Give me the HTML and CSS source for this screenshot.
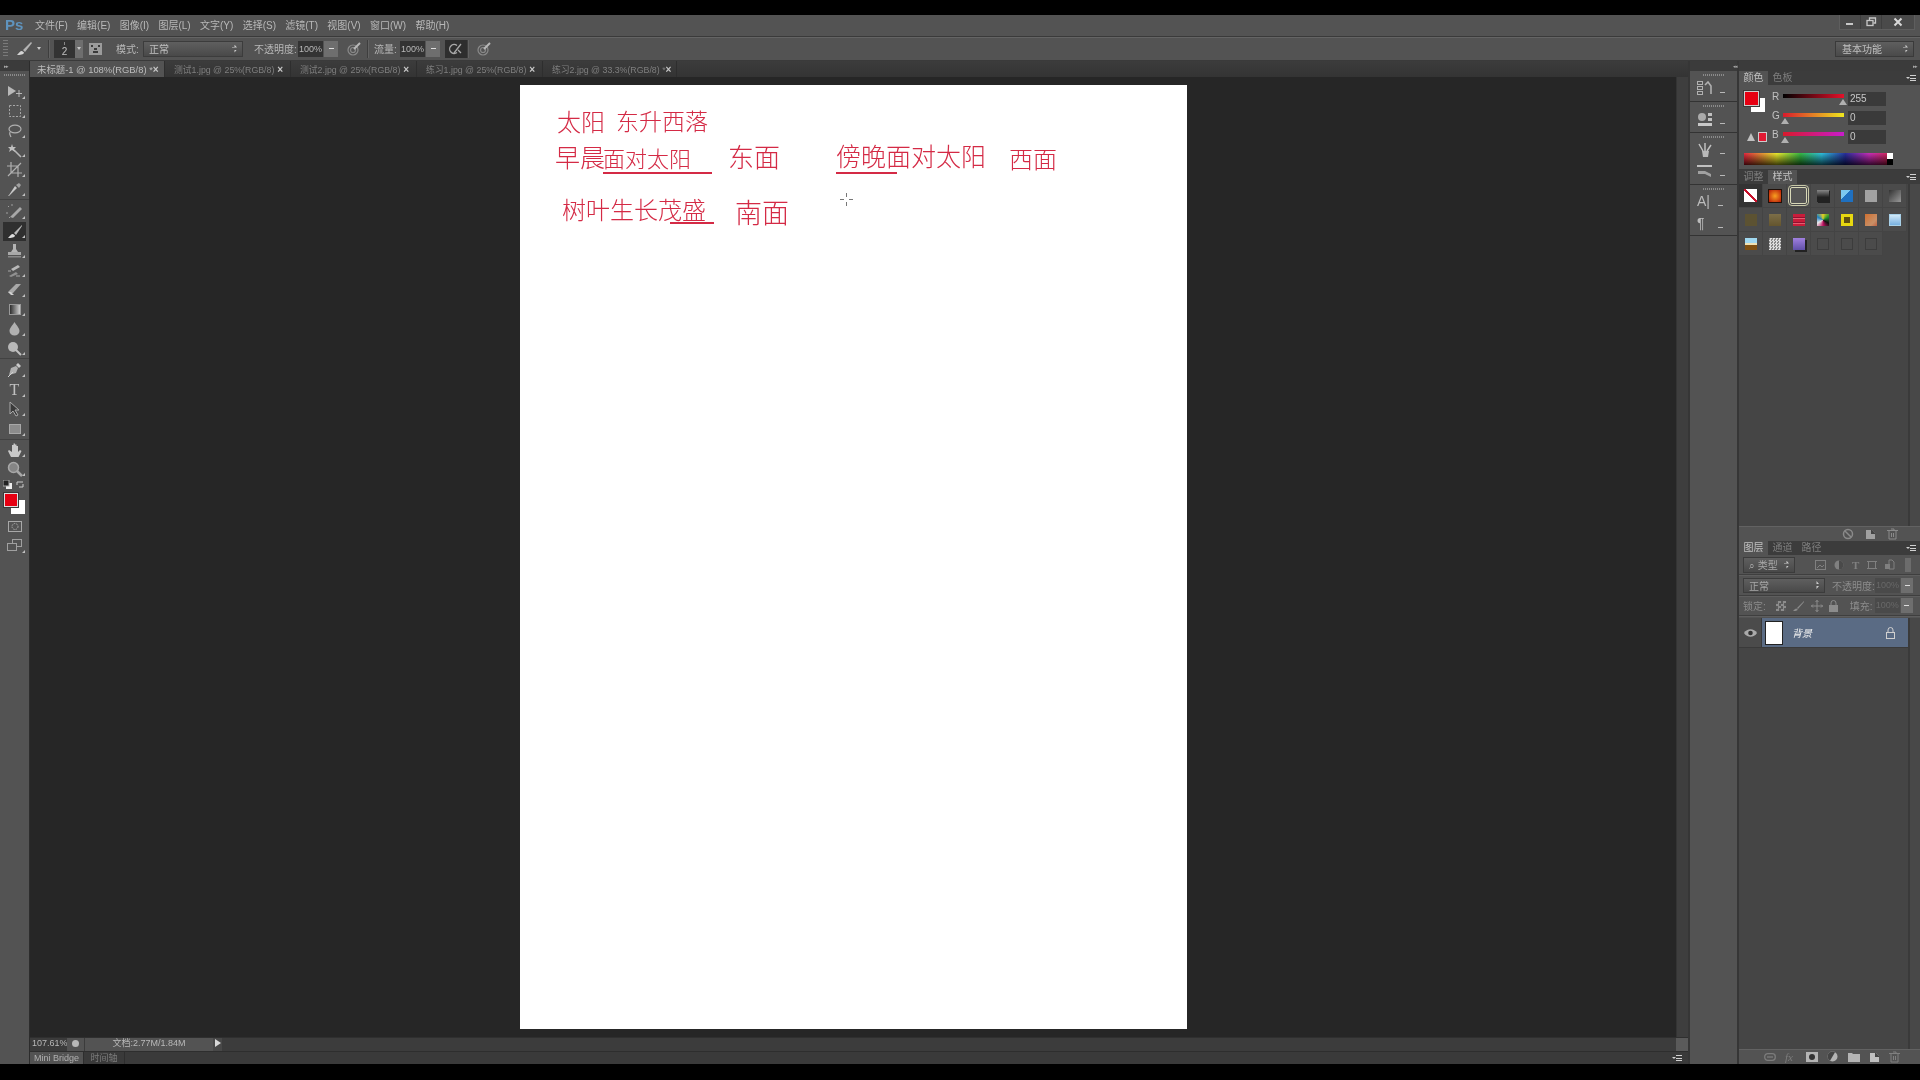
FILE: index.html
```html
<!DOCTYPE html>
<html lang="zh-CN">
<head>
<meta charset="utf-8">
<title>Photoshop</title>
<link rel="stylesheet" href="styles.css">
</head>
<body>
<div class="app">
  <div class="black-top"></div>

  <header class="menubar">
    <div class="logo">Ps</div>
    <nav class="menu">
      <span>文件(F)</span><span>编辑(E)</span><span>图像(I)</span><span>图层(L)</span><span>文字(Y)</span><span>选择(S)</span><span>滤镜(T)</span><span>视图(V)</span><span>窗口(W)</span><span>帮助(H)</span>
    </nav>
    <div class="winbtns">
      <div class="winbtn w1"><svg width="10" height="10" viewBox="0 0 10 10"><rect x="1" y="6" width="7" height="2" fill="#c8c8c8"/></svg></div>
      <div class="winbtn w2"><svg width="11" height="10" viewBox="0 0 11 10" fill="none" stroke="#c8c8c8" stroke-width="1.3"><rect x="1" y="3.5" width="6" height="5"/><path d="M3.5 3V1h6v5H7.5"/></svg></div>
      <div class="winbtn w3"><svg width="10" height="10" viewBox="0 0 10 10" stroke="#d8d8d8" stroke-width="2"><path d="M1.5 1.5l7 7M8.5 1.5l-7 7"/></svg></div>
    </div>
  </header>

  <div class="optbar">
    <div class="grip"></div>
    <svg class="opt-brush" width="18" height="16" viewBox="0 0 18 16"><path d="M16 1L8 9l2 2 7-9z" fill="#b4b4b4"/><path d="M7 10c-2 0-3 2-5 4 3 0 7-.5 7-2.500z" fill="#d4d4d4"/></svg>
    <span class="tri-down"></span>
    <div class="vsep s1"></div>
    <div class="sizebox"><i></i><b>2</b></div>
    <div class="sizebtn"><span class="tri-down"></span></div>
    <div class="brushpanel"><svg width="13" height="12" viewBox="0 0 13 12"><rect width="13" height="12" fill="#9b9b9b"/><path d="M2 2h2v2H2zm7 0h2v2H9zM5 5h3v2H5zM4 8h5v2H4z" fill="#3a3a3a"/></svg></div>
    <span class="lbl l-mode">模式:</span>
    <div class="select s-mode"><span>正常</span><em class="updown"></em></div>
    <span class="lbl l-op">不透明度:</span>
    <div class="field f-op">100%</div>
    <div class="fbtn"><span class="dash"></span></div>
    <svg class="air a1" width="14" height="14" viewBox="0 0 14 14" fill="none" stroke="#8a8a8a" stroke-width="1.200"><circle cx="6" cy="8" r="5"/><circle cx="6" cy="8" r="2.500"/><path d="M7 7l6-6" stroke="#b8b8b8" stroke-width="2"/></svg>
    <div class="vsep s2"></div>
    <span class="lbl l-fl">流量:</span>
    <div class="field f-fl">100%</div>
    <div class="fbtn"><span class="dash"></span></div>
    <div class="airbox"><svg width="14" height="12" viewBox="0 0 14 12" fill="none" stroke="#a8a8a8" stroke-width="1.300"><path d="M8 2.500A4.500 4.500 0 1 0 8 9.500M5 10l7-9M9 7l3 3"/></svg></div>
    <div class="vsep s3"></div>
    <svg class="air a2" width="14" height="14" viewBox="0 0 14 14" fill="none" stroke="#8a8a8a" stroke-width="1.200"><circle cx="6" cy="8" r="5"/><circle cx="6" cy="8" r="2.500"/><path d="M7 7l6-6" stroke="#b8b8b8" stroke-width="2"/></svg>
    <div class="workspace"><span>基本功能</span><em class="updown"></em></div>
  </div>

  <div class="work">
    <aside class="toolbar">
      <div class="strip"><span class="arrows">▸▸</span></div>
      <div class="grip-h"></div>
      <div class="toolgroup g1">
        <div class="tool more"><svg width="16" height="14" viewBox="0 0 16 14"><path d="M1 1l8 5-8 5z" fill="#b8b8b8"/><path d="M12 5v7M9 8.500h6" stroke="#b8b8b8"/></svg></div>
        <div class="tool more"><svg width="14" height="14" viewBox="0 0 14 14"><rect x="1.500" y="1.500" width="11" height="11" fill="none" stroke="#a8a8a8" stroke-dasharray="2 1.500"/></svg></div>
        <div class="tool more"><svg width="15" height="14" viewBox="0 0 15 14" fill="none" stroke="#b0b0b0" stroke-width="1.200"><ellipse cx="8" cy="5" rx="6" ry="3.800"/><path d="M3 8c-1 2 0 3 1 5"/></svg></div>
        <div class="tool more"><svg width="15" height="15" viewBox="0 0 15 15"><path d="M7 7l7 7" stroke="#b8b8b8" stroke-width="1.600"/><path d="M5 1l1 3 3 0-2 2 1 3-3-2-3 2 1-3-2-2 3 0z" fill="#c0c0c0"/></svg></div>
        <div class="tool more"><svg width="15" height="15" viewBox="0 0 15 15" fill="none" stroke="#b0b0b0" stroke-width="1.200"><path d="M4 0v11h11M0 4h11v11M1 14L14 1"/></svg></div>
        <div class="tool more"><svg width="15" height="15" viewBox="0 0 15 15"><path d="M2 13l-1 1 1 0 8-8-2-2z" fill="#c8c8c8"/><path d="M9 3l3 3 2-3-2-2z" fill="#a0a0a0"/></svg></div>
      </div>
      <div class="toolgroup g2">
        <div class="tool more"><svg width="17" height="15" viewBox="0 0 17 15"><path d="M4 13L14 3l2 2L7 14z" fill="#a8a8a8"/><path d="M2 3l1-1M1 8v2M5 1h2M3 13l1 1" stroke="#a0a0a0" stroke-dasharray="2 1"/></svg></div>
        <div class="tool active more"><svg width="17" height="15" viewBox="0 0 17 15"><path d="M16 1L8 9l2 2 6-9z" fill="#b8b8b8"/><path d="M7 10c-2 0-3 2-5 4 3 0 7-.5 7-2.500z" fill="#dcdcdc"/></svg></div>
        <div class="tool more"><svg width="15" height="15" viewBox="0 0 15 15"><path d="M6 1h3v5l2 3H4l2-3z" fill="#b4b4b4"/><rect x="1" y="9" width="13" height="3" fill="#a8a8a8"/><rect x="1" y="13" width="13" height="1.500" fill="#888"/></svg></div>
        <div class="tool more"><svg width="15" height="15" viewBox="0 0 15 15"><path d="M4 6l7-4 2 2-7 4z" fill="#b8b8b8"/><path d="M2 13l7-4 2 2-7 3z" fill="#909090"/><path d="M1 8h3M9 13h4" stroke="#a8a8a8"/></svg></div>
        <div class="tool more"><svg width="15" height="15" viewBox="0 0 15 15"><path d="M1 10l8-8h5l-8 9H3z" fill="#a8a8a8"/><path d="M1 10l3 3h3l-3-3z" fill="#d0d0d0"/></svg></div>
        <div class="tool more"><span class="gradicon"></span></div>
        <div class="tool more"><svg width="13" height="15" viewBox="0 0 13 15"><path d="M6.500 1C9 5 11.500 7 11.500 10a5 4.500 0 0 1-10 0C1.500 7 4 5 6.500 1z" fill="#b0b0b0"/></svg></div>
        <div class="tool more"><svg width="15" height="15" viewBox="0 0 15 15"><circle cx="6" cy="6" r="5" fill="#b8b8b8"/><path d="M9 9l5 5" stroke="#c0c0c0" stroke-width="2"/></svg></div>
      </div>
      <div class="toolgroup g3">
        <div class="tool more"><svg width="15" height="16" viewBox="0 0 15 16"><path d="M2 13l2-7 5-2 2 2-2 5z" fill="#b0b0b0"/><path d="M9 3l2-2 3 3-2 2z" fill="#c8c8c8"/><path d="M1 15l5-5" stroke="#d0d0d0"/></svg></div>
        <div class="tool more tool-text">T</div>
        <div class="tool more"><svg width="13" height="16" viewBox="0 0 13 16"><path d="M2 1v12l3-3 3 5 2-1-3-5 4 0z" fill="#3a3a3a" stroke="#a8a8a8"/></svg></div>
        <div class="tool more"><span class="recticon"></span></div>
      </div>
      <div class="toolgroup g4">
        <div class="tool more"><svg width="16" height="16" viewBox="0 0 16 16"><path d="M4 15L1 9l1-1 3 2V3h1.500v5V1.500H8V8V2.500h1.500V8V4H11v6l2-2 1.500 1-3 6z" fill="#c8c8c8"/></svg></div>
        <div class="tool more"><svg width="16" height="16" viewBox="0 0 16 16" fill="none" stroke="#a8a8a8"><circle cx="6.500" cy="6.500" r="5" stroke-width="1.500" fill="#858585"/><path d="M10 10l5 5" stroke-width="2.500"/></svg></div>
      </div>
      <div class="mini-colors"><span class="mini-sw"><svg width="9" height="9" viewBox="0 0 9 9"><rect x="3" y="3" width="6" height="6" fill="#eee"/><rect width="6" height="6" fill="#222" stroke="#aaa"/></svg></span><span class="mini-sw"><svg width="9" height="9" viewBox="0 0 9 9" fill="none" stroke="#ccc"><path d="M1 5V2h6M7 4v3H3"/></svg></span></div>
      <div class="colors"><span class="bgc"></span><span class="fgc"></span></div>
      <div class="tool mask"><svg width="14" height="11" viewBox="0 0 14 11" fill="none" stroke="#a8a8a8"><rect x=".5" y=".5" width="13" height="10"/><circle cx="7" cy="5.500" r="3" stroke-dasharray="1.500 1"/></svg></div>
      <div class="tool more"><svg width="15" height="13" viewBox="0 0 15 13" fill="none" stroke="#a0a0a0"><rect x="5.500" y=".5" width="9" height="7"/><rect x=".5" y="4.500" width="9" height="7" fill="#535353"/></svg></div>
    </aside>

    <main class="center">
      <div class="tabs">
        <div class="tab on t1"><span>未标题-1 @ 108%(RGB/8) *</span><b>×</b></div>
        <div class="tab t2"><span>测试1.jpg @ 25%(RGB/8)</span><b>×</b></div>
        <div class="tab t2"><span>测试2.jpg @ 25%(RGB/8)</span><b>×</b></div>
        <div class="tab t2"><span>练习1.jpg @ 25%(RGB/8)</span><b>×</b></div>
        <div class="tab t3"><span>练习2.jpg @ 33.3%(RGB/8) *</span><b>×</b></div>
      </div>
      <div class="docrow">
        <div class="pasteboard">
          <div class="canvas">
            <span class="ink i1">太阳</span>
            <span class="ink i2">东升西落</span>
            <span class="ink i3">早晨</span>
            <span class="ink i4">面对太阳</span>
            <span class="stroke u1"></span>
            <span class="ink i5">东面</span>
            <span class="ink i6">傍晚面对太阳</span>
            <span class="stroke u2"></span>
            <span class="ink i7">西面</span>
            <span class="ink i8">树叶生长茂盛</span>
            <span class="stroke u3"></span>
            <span class="ink i9">南面</span>
            <svg class="cross" width="13" height="13" viewBox="0 0 13 13" stroke="#777"><path d="M6.500 0v4M6.500 9v4M0 6.500h4M9 6.500h4"/></svg>
          </div>
        </div>
        <div class="vscroll"></div>
      </div>
      <div class="status">
        <span class="zoomval">107.61%</span>
        <span class="statbtn"></span>
        <div class="docinfo">文档:2.77M/1.84M</div>
        <div class="statarrow"></div>
        <div class="hscroll"></div>
        <div class="corner"></div>
      </div>
      <div class="btabs">
        <div class="btab b1">Mini Bridge</div>
        <div class="btab b2">时间轴</div>
        <div class="menuicon bmenu"><i></i></div>
      </div>
    </main>

    <div class="dock">
      <div class="strip right"><span class="arrows">◂◂</span></div>
      <div class="dockgroup h30">
        <div class="grip-h"></div>
        <div class="dockitem"><svg width="16" height="15" viewBox="0 0 16 15" fill="none" stroke="#b0b0b0"><rect x=".5" y=".5" width="5" height="3"/><rect x=".5" y="5.500" width="5" height="3"/><rect x=".5" y="10.500" width="5" height="3"/><path d="M8 4l3-3 3 4v8" stroke-width="1.600"/></svg><em></em></div>
      </div>
      <div class="dockgroup h31">
        <div class="grip-h"></div>
        <div class="dockitem"><svg width="16" height="15" viewBox="0 0 16 15"><circle cx="5" cy="5" r="4" fill="#aaa"/><rect x="11" y="1" width="4" height="3" fill="#c0c0c0"/><rect x="11" y="6" width="4" height="3" fill="#c0c0c0"/><rect x="1" y="11" width="14" height="3" fill="#c8c8c8"/></svg><em></em></div>
      </div>
      <div class="dockgroup h52">
        <div class="grip-h"></div>
        <div class="dockitem"><svg width="16" height="15" viewBox="0 0 16 15"><path d="M5 9h7l-1 6H6z" fill="#b8b8b8"/><path d="M6 9L2 2M8 9V1M10 9l4-6" stroke="#c0c0c0" stroke-width="1.500"/></svg><em></em></div>
        <div class="dockitem"><svg width="16" height="14" viewBox="0 0 16 14"><rect x="0" y="1" width="15" height="2" fill="#c0c0c0"/><path d="M1 7h7l6 3v3L8 10H1z" fill="#a0a0a0"/></svg><em></em></div>
      </div>
      <div class="dockgroup h51">
        <div class="grip-h"></div>
        <div class="dockitem txt"><span>A|</span><em></em></div>
        <div class="dockitem txt"><span>¶</span><em></em></div>
      </div>
    </div>

    <aside class="panels">
      <div class="strip right"><span class="arrows">▸▸</span></div>
      <section class="p-color">
        <div class="ptabs">
          <div class="ptab on">颜色</div><div class="ptab">色板</div>
          <div class="menuicon"><i></i></div>
        </div>
        <div class="colorbody">
          <div class="colormain">
            <div class="colorleft">
              <div class="bigsw"><span class="bg"></span><span class="fg"></span></div>
              <div class="warn"><span class="warntri"></span><span class="warnsq"></span></div>
            </div>
            <div class="sliders">
              <div class="slider"><label>R</label><div class="track"><span class="bar r"></span><span class="thumb tend"></span></div><div class="cfield">255</div></div>
              <div class="slider"><label>G</label><div class="track"><span class="bar g"></span><span class="thumb"></span></div><div class="cfield">0</div></div>
              <div class="slider"><label>B</label><div class="track"><span class="bar b"></span><span class="thumb"></span></div><div class="cfield">0</div></div>
            </div>
          </div>
          <div class="spectrum"><span class="wb"></span></div>
        </div>
      </section>
      <section class="p-styles">
        <div class="ptabs">
          <div class="ptab">调整</div><div class="ptab on">样式</div>
          <div class="menuicon"><i></i></div>
        </div>
        <div class="stylesbody">
          <div class="stylegrid">
            <div class="cell first"><span class="sw s-none"></span></div>
            <div class="cell"><span class="sw s-fire"></span></div>
            <div class="cell"><span class="sw s-frame"></span></div>
            <div class="cell"><span class="sw s-dark"></span></div>
            <div class="cell"><span class="sw s-blue"></span></div>
            <div class="cell"><span class="sw s-gray"></span></div>
            <div class="cell"><span class="sw s-graygrad"></span></div>
            <div class="cell"><span class="sw s-brown1"></span></div>
            <div class="cell"><span class="sw s-brown2"></span></div>
            <div class="cell"><span class="sw s-red"></span></div>
            <div class="cell"><span class="sw s-multi"></span></div>
            <div class="cell"><span class="sw s-yellow"></span></div>
            <div class="cell"><span class="sw s-orange"></span></div>
            <div class="cell"><span class="sw s-lblue"></span></div>
            <div class="cell"><span class="sw s-sky"></span></div>
            <div class="cell"><span class="sw s-noise"></span></div>
            <div class="cell"><span class="sw s-purple"></span></div>
            <div class="cell"><span class="sw s-out"></span></div>
            <div class="cell"><span class="sw s-out"></span></div>
            <div class="cell"><span class="sw s-out"></span></div>
          </div>
          <div class="pscroll"></div>
        </div>
        <div class="pfoot f-styles">
          <svg width="12" height="12" viewBox="0 0 12 12" fill="none" stroke="#8a8a8a" stroke-width="1.500"><circle cx="6" cy="6" r="4.500"/><path d="M3 3l6 6"/></svg>
          <svg width="11" height="11" viewBox="0 0 11 11"><path d="M1 1h6l3 3v6H1z" fill="#a0a0a0"/><path d="M6 1h1l3 3v1H6z" fill="#444"/></svg>
          <svg width="11" height="12" viewBox="0 0 11 12" fill="none" stroke="#8a8a8a"><path d="M0 2.500h11M2 3v8h7V3M4 1h3v1.500M4.500 5v4M6.500 5v4"/></svg>
        </div>
      </section>
      <section class="p-layers">
        <div class="ptabs">
          <div class="ptab on">图层</div><div class="ptab">通道</div><div class="ptab">路径</div>
          <div class="menuicon"><i></i></div>
        </div>
        <div class="lrow r-filter">
          <div class="select s-filter"><span>⌕ 类型</span><em class="updown"></em></div>
          <div class="ficons">
            <svg width="11" height="10" viewBox="0 0 11 10" fill="none" stroke="#808080"><rect x=".5" y=".5" width="10" height="9"/><path d="M2 8l3-3 2 2 2-2"/></svg>
            <svg width="10" height="10" viewBox="0 0 10 10"><circle cx="5" cy="5" r="4.500" fill="#808080"/><path d="M5 .5a4.500 4.500 0 0 1 0 9z" fill="#4a4a4a"/></svg>
            <span class="fT">T</span>
            <svg width="10" height="10" viewBox="0 0 10 10" fill="none" stroke="#808080"><rect x="1.500" y="1.500" width="7" height="7"/><path d="M0 1.500h3M7 1.500h3M0 8.500h3M7 8.500h3"/></svg>
            <svg width="10" height="11" viewBox="0 0 10 11"><path d="M4 1h3l2 2v7H4z" fill="none" stroke="#808080"/><rect x="0" y="5" width="5" height="5" fill="#808080"/></svg>
            <span class="ftoggle"></span>
          </div>
        </div>
        <div class="lrow r-mode">
          <div class="select s-blend"><span>正常</span><em class="updown"></em></div>
          <span class="plbl op">不透明度:</span>
          <div class="dimfield">100%</div>
          <div class="fbtn small"><span class="dash"></span></div>
        </div>
        <div class="lrow r-lock">
          <span class="plbl">锁定:</span>
          <div class="lockicons">
            <span class="chk"></span>
            <svg width="13" height="12" viewBox="0 0 13 12"><path d="M12 1L5 8l1 1 6-7z" fill="#8c8c8c"/><path d="M4 8.500C3 9 2 10 1 11c2 0 5 0 4.500-2z" fill="#8c8c8c"/></svg>
            <svg width="12" height="12" viewBox="0 0 12 12" fill="none" stroke="#8c8c8c"><path d="M6 0v12M0 6h12M4.500 2L6 .5 7.500 2M4.500 10L6 11.500 7.500 10M2 4.500L.5 6 2 7.500M10 4.500L11.500 6 10 7.500"/></svg>
            <svg width="9" height="12" viewBox="0 0 9 12"><path d="M2 5V3a2.500 2.500 0 0 1 5 0v2" fill="none" stroke="#8c8c8c"/><rect y="5" width="9" height="7" fill="#8c8c8c"/></svg>
          </div>
          <span class="plbl fill">填充:</span>
          <div class="dimfield">100%</div>
          <div class="fbtn small"><span class="dash"></span></div>
        </div>
        <div class="layersbody">
          <div class="layerlist">
            <div class="layer">
              <div class="eye"><svg width="13" height="8" viewBox="0 0 13 8"><path d="M0 4c3-5 10-5 13 0-3 5-10 5-13 0z" fill="#aaa"/><circle cx="6.500" cy="4" r="2.300" fill="#333"/></svg></div>
              <div class="lmain">
                <div class="thumb-l"></div>
                <span class="lname">背景</span>
                <svg class="llock" width="9" height="12" viewBox="0 0 9 12" fill="none" stroke="#d0d0d0"><path d="M2 5V3a2.500 2.500 0 0 1 5 0v2"/><rect x=".5" y="5.500" width="8" height="6"/></svg>
              </div>
            </div>
          </div>
          <div class="pscroll"></div>
        </div>
        <div class="pfoot f-layers">
          <svg width="12" height="8" viewBox="0 0 12 8" fill="none" stroke="#7c7c7c" stroke-width="1.300"><rect x=".7" y=".7" width="10.600" height="6.600" rx="3"/><path d="M3 4h6"/></svg>
          <span class="fx">fx</span>
          <svg width="12" height="10" viewBox="0 0 12 10"><rect width="12" height="10" fill="#b4b4b4"/><circle cx="6" cy="5" r="3" fill="#333"/></svg>
          <svg width="12" height="12" viewBox="0 0 12 12"><circle cx="5.500" cy="5.500" r="5" fill="#b4b4b4"/><path d="M5.500 .5a5 5 0 0 0 0 10z" fill="#444" transform="rotate(30 5.500 5.500)"/></svg>
          <svg width="12" height="10" viewBox="0 0 12 10"><path d="M0 1h4l1 1h7v8H0z" fill="#b4b4b4"/></svg>
          <svg width="11" height="11" viewBox="0 0 11 11"><path d="M1 1h6l3 3v6H1z" fill="#c0c0c0"/><path d="M6 1h1l3 3v1H6z" fill="#444"/></svg>
          <svg width="11" height="12" viewBox="0 0 11 12" fill="none" stroke="#808080"><path d="M0 2.500h11M2 3v8h7V3M4 1h3v1.500M4.500 5v4M6.500 5v4"/></svg>
        </div>
      </section>
    </aside>
  </div>

  <div class="black-bottom"></div>
</div>
</body>
</html>
```
FILE: styles.css
```css
* { box-sizing: border-box; margin: 0; padding: 0; }
html, body { width: 1920px; height: 1080px; overflow: hidden; background: #000; }
body { font-family: "Liberation Sans", "Noto Sans CJK SC", sans-serif; font-size: 10px; color: #bdbdbd; }
em { font-style: normal; }

.app { width: 1920px; height: 1080px; display: flex; flex-direction: column; filter: blur(0.4px); }
.black-top { height: 15px; background: #000; flex: none; }
.black-bottom { height: 16px; background: #000; flex: none; }

/* menu */
.menubar { height: 22px; flex: none; display: flex; align-items: center; background: #535353; border-bottom: 1px solid #3a3a3a; position: relative; }
.logo { width: 35px; padding-left: 5px; font: bold 15px "Liberation Sans", sans-serif; color: #5f93bd; margin-bottom: 2px; }
.menu { display: flex; gap: 9.300px; color: #b8b8b8; margin-bottom: 2px; }
.winbtns { margin-left: auto; margin-right: 5px; align-self: flex-start; display: flex; height: 15px; background: #4a4a4a; border: 1px solid #5e5e5e; border-top: 0; }
.winbtn { display: flex; align-items: center; justify-content: center; border-right: 1px solid #3e3e3e; }
.w1 { width: 21px; } .w2 { width: 21px; } .w3 { width: 32px; border-right: 0; }

/* options */
.optbar { height: 24px; flex: none; display: flex; align-items: center; background: #535353; border-top: 1px solid #646464; padding-bottom: 2px; }
.grip { width: 5px; height: 18px; margin-left: 3px; background: repeating-linear-gradient(#7a7a7a 0 1px, transparent 1px 3px); }
.opt-brush { margin-left: 7px; }
.tri-down { display: inline-block; width: 0; height: 0; border: 2.500px solid transparent; border-top: 3px solid #c8c8c8; border-bottom: 0; }
.optbar > .tri-down { margin-left: 4px; }
.vsep { width: 1px; height: 18px; background: #3e3e3e; box-shadow: 1px 0 #626262; }
.s1 { margin-left: 7px; }
.sizebox { margin-left: 5px; width: 21px; height: 18px; background: #333; display: flex; flex-direction: column; align-items: center; color: #c0c0c0; font-size: 10px; }
.sizebox i { width: 1px; height: 3px; margin-top: 2px; background: #888; }
.sizebox b { font-weight: normal; line-height: 12px; margin-top: 1px; }
.sizebtn { width: 8px; height: 18px; background: #6e6e6e; display: flex; align-items: center; justify-content: center; }
.brushpanel { margin-left: 6px; width: 13px; display: flex; }
.lbl { color: #b8b8b8; white-space: nowrap; }
.l-mode { margin-left: 14px; width: 27px; }
.select { display: flex; align-items: center; justify-content: space-between; background: linear-gradient(#5f5f5f, #494949); border: 1px solid #3c3c3c; color: #c0c0c0; padding: 0 5px; }
.s-mode { margin-left: 0; width: 100px; height: 16px; }
.updown { width: 5px; height: 8px; background: linear-gradient(#ccc 0 3px, transparent 3px 5px, #ccc 5px); clip-path: polygon(50% 0, 100% 37%, 0 37%, 0 63%, 100% 63%, 50% 100%); }
.l-op { margin-left: 11px; width: 44px; }
.field { width: 25px; height: 16px; background: #333; color: #b8b8b8; line-height: 16px; text-align: center; font-size: 9px; }
.fbtn { width: 14px; height: 16px; margin-left: 1px; background: #6e6e6e; display: flex; align-items: center; justify-content: center; }
.dash { width: 5px; height: 1px; background: #ddd; }
.a1 { margin-left: 9px; }
.s2 { margin-left: 6px; }
.l-fl { margin-left: 6px; width: 26px; }
.airbox { margin-left: 5px; width: 22px; height: 18px; background: #2e2e2e; display: flex; align-items: center; justify-content: center; }
.s3 { margin-left: 0; }
.a2 { margin-left: 9px; }
.workspace { margin-left: auto; margin-right: 6px; width: 79px; height: 16px; display: flex; align-items: center; justify-content: space-between; padding: 0 5px 0 6px; background: linear-gradient(#5f5f5f, #4a4a4a); border: 1px solid #3a3a3a; color: #c0c0c0; }

/* work area */
.work { flex: 1; min-height: 0; display: flex; background: #535353; border-top: 1px solid #3a3a3a; margin-top: -1px; }
.strip { height: 10px; flex: none; background: #3b3b3b; display: flex; align-items: center; color: #a8a8a8; }
.strip.right { justify-content: flex-end; padding-right: 3px; }
.arrows { font-size: 5px; letter-spacing: -1px; padding-left: 4px; line-height: 1; }

/* toolbar */
.toolbar { width: 30px; flex: none; display: flex; flex-direction: column; background: #535353; border-right: 1px solid #2c2c2c; }
.grip-h { height: 2px; width: 22px; margin: 3px auto 0; flex: none; background: repeating-linear-gradient(90deg, #8a8a8a 0 1px, transparent 1px 2px); }
.toolgroup { display: flex; flex-direction: column; border-bottom: 1px solid #424242; flex: none; }
.g1 { padding-top: 6px; }
.g2 { padding-top: 2px; }
.g3 { padding-top: 1.500px; }
.g4 { padding-top: .7px; border-bottom: 0; }
.tool { height: 19.500px; width: 29px; flex: none; display: flex; align-items: center; justify-content: center; position: relative; }
.tool.more::after { content: ""; position: absolute; right: 4px; bottom: 3px; border-left: 3px solid transparent; border-bottom: 3px solid #c0c0c0; }
.tool.active { background: #2f2f2f; width: 23px; margin-left: 3px; }
.tool.active.more::after { right: 1px; }
.tool-text { font: 16px "Liberation Serif", serif; color: #c0c0c0; }
.gradicon { width: 12px; height: 11px; background: linear-gradient(90deg, #2e2e2e, #cfcfcf); border: 1px solid #999; }
.recticon { width: 12px; height: 10px; background: #8c8c8c; border: 1px solid #a8a8a8; }
.mini-colors { display: flex; justify-content: space-between; padding: 1px 4px 0 3px; height: 12px; flex: none; }
.mini-sw { display: flex; }
.colors { height: 22px; flex: none; position: relative; margin: 2px 0 1px; }
.fgc { position: absolute; left: 4px; top: 0; width: 14px; height: 14px; background: #e60012; border: 1px solid #ddd; box-shadow: 0 0 0 1px #3a3a3a; }
.bgc { position: absolute; left: 11px; top: 7px; width: 14px; height: 14px; background: #fff; }
.mask { height: 20px; }

/* center */
.center { width: 1658px; flex: none; display: flex; flex-direction: column; background: #262626; }
.tabs { height: 16px; flex: none; display: flex; background: linear-gradient(#3c3c3c, #343434); font-size: 8.800px; }
.tab { height: 16px; display: flex; align-items: center; justify-content: space-between; color: #7f7f7f; white-space: nowrap; border-right: 1px solid #2e2e2e; }
.tab b { font-size: 10px; color: #c8c8c8; font-weight: bold; }
.tab.on { background: #535353; color: #bcbcbc; font-size: 9.400px; }
.t1 { width: 135px; padding: 0 7px 0 7px; }
.t2 { width: 126px; padding: 0 7px 0 9px; }
.t3 { width: 134px; padding: 0 7px 0 9px; }
.docrow { flex: 1; min-height: 0; display: flex; }
.pasteboard { flex: 1; display: flex; align-items: center; justify-content: center; background: #262626; padding-left: 1px; }
.canvas { width: 667px; height: 944px; background: #fff; position: relative; flex: none; }
.vscroll { width: 12px; flex: none; background: #3e3e3e; border-left: 1px solid #343434; }

.ink { position: absolute; color: #d42a45; font-family: "Noto Sans CJK SC", sans-serif; font-weight: 300; line-height: 1; white-space: nowrap; }
.stroke { position: absolute; height: 2px; background: #d42a45; }
.i1 { left: 37px; top: 24px; font-size: 24px; }
.i2 { left: 96px; top: 24px; font-size: 23px; }
.i3 { left: 35px; top: 59px; font-size: 25px; }
.i4 { left: 83px; top: 61px; font-size: 22px; }
.u1 { left: 83px; top: 87px; width: 109px; }
.i5 { left: 208px; top: 58px; font-size: 26px; }
.i6 { left: 316px; top: 58px; font-size: 25px; }
.u2 { left: 316px; top: 87px; width: 61px; }
.i7 { left: 489px; top: 61px; font-size: 24px; }
.i8 { left: 42px; top: 112px; font-size: 24px; }
.u3 { left: 150px; top: 137px; width: 44px; }
.i9 { left: 215px; top: 113px; font-size: 27px; }
.cross { position: absolute; left: 320px; top: 108px; }

.status { height: 14px; flex: none; display: flex; align-items: stretch; background: #3b3b3b; border-top: 1px solid #2f2f2f; font-size: 9px; }
.zoomval { width: 37px; padding-left: 2px; line-height: 11px; color: #b8b8b8; white-space: nowrap; }
.statbtn { width: 17px; background: #535353; position: relative; }
.statbtn::after { content: ""; position: absolute; left: 5px; top: 2px; width: 7px; height: 7px; border-radius: 50%; background: #b8b8b8; }
.docinfo { width: 128px; background: #535353; margin-left: 1px; text-align: center; line-height: 11px; color: #b8b8b8; }
.statarrow { width: 9px; background: #484848; position: relative; }
.statarrow::after { content: ""; position: absolute; left: 2px; top: 1px; border-left: 6px solid #d8d8d8; border-top: 4px solid transparent; border-bottom: 4px solid transparent; }
.hscroll { flex: 1; background: #3c3c3c; }
.corner { width: 12px; background: #5a5a5a; }
.btabs { height: 13px; flex: none; display: flex; background: #3a3a3a; border-top: 1px solid #2e2e2e; position: relative; font-size: 9px; }
.btab { line-height: 12px; color: #7c7c7c; border-right: 1px solid #2e2e2e; text-align: center; }
.b1 { width: 54px; background: #535353; color: #b0b0b0; }
.b2 { width: 41px; }
.menuicon { margin-left: auto; margin-right: 4px; width: 10px; height: 6px; position: relative; align-self: center; }
.menuicon i { display: block; position: absolute; right: 0; top: 0; width: 6px; height: 6px; border-top: 1px solid #d0d0d0; border-bottom: 1px solid #d0d0d0; background: linear-gradient(#d0d0d0, #d0d0d0) center / 100% 1px no-repeat; }
.menuicon::before { content: ""; position: absolute; left: 0; top: 2px; border-left: 2px solid transparent; border-right: 2px solid transparent; border-top: 2px solid #d0d0d0; }
.bmenu { margin-right: 6px; }

/* dock */
.dock { width: 51px; flex: none; display: flex; flex-direction: column; background: #535353; border-left: 2px solid #363636; border-right: 2px solid #363636; }
.dock .strip.right { padding-right: 0; }
.dockgroup { display: flex; flex-direction: column; border-bottom: 1px solid #333; flex: none; }
.h30 { height: 31px; } .h31 { height: 31px; } .h52 { height: 52px; } .h51 { height: 51px; }
.dockitem { height: 22px; display: flex; align-items: center; padding-left: 7px; gap: 7px; }
.h30 .dockitem, .h31 .dockitem { height: 24px; }
.dockitem em { width: 5px; height: 1px; margin-top: 8px; background: #b8b8b8; }
.dockitem.txt span { width: 16px; font-size: 14px; color: #bcbcbc; line-height: 1; }
.dockitem.txt { gap: 5px; }

/* panels */
.panels { width: 181px; flex: none; display: flex; flex-direction: column; background: #535353; }
.ptabs { height: 14px; flex: none; display: flex; background: #3c3c3c; }
.ptab { line-height: 14px; width: 29px; color: #7e7e7e; text-align: center; white-space: nowrap; }
.ptab.on { background: #535353; color: #c0c0c0; }
.p-color { height: 99px; flex: none; display: flex; flex-direction: column; border-bottom: 1px solid #3a3a3a; }
.colorbody { flex: 1; padding: 6px 0 0 5px; }
.colormain { display: flex; height: 62px; }
.colorleft { width: 28px; display: flex; flex-direction: column; }
.bigsw { height: 22px; width: 22px; position: relative; flex: none; }
.bigsw .fg { position: absolute; left: 0; top: 0; width: 15px; height: 15px; background: #e60012; border: 1px solid #ccc; box-shadow: 0 0 0 1px #3a3a3a; }
.bigsw .bg { position: absolute; left: 7px; top: 7px; width: 14px; height: 14px; background: #fff; }
.warn { display: flex; align-items: center; gap: 3px; margin-top: 19px; margin-left: 3px; }
.warntri { width: 0; height: 0; border-left: 4px solid transparent; border-right: 4px solid transparent; border-bottom: 8px solid #c0c0c0; }
.warnsq { width: 9px; height: 10px; background: #e01a33; border: 1px solid #ccc; }
.sliders { display: flex; flex-direction: column; margin-top: -2px; }
.slider { height: 19px; display: flex; align-items: center; }
.slider label { width: 11px; color: #c0c0c0; margin-top: -4px; }
.track { width: 61px; height: 19px; position: relative; margin-right: 4px; }
.bar { position: absolute; left: 0; right: 0; top: 5px; height: 4px; }
.bar.r { background: linear-gradient(90deg, #000, #e6102a); }
.bar.g { background: linear-gradient(90deg, #d81a2c, #f0e81e); }
.bar.b { background: linear-gradient(90deg, #d81a2c, #c81ccc); }
.thumb { position: absolute; left: -2px; top: 10px; width: 0; height: 0; border-left: 4px solid transparent; border-right: 4px solid transparent; border-bottom: 6px solid #b0b0b0; }
.thumb.tend { left: auto; right: -3px; }
.cfield { width: 38px; height: 14px; background: #3a3a3a; color: #c8c8c8; line-height: 14px; padding-left: 2px; }
.spectrum { width: 149px; height: 12px; background: linear-gradient(90deg, #e0102a, #e8e818 22%, #20b030 38%, #18b8d8 52%, #101890 68%, #c018b0 84%, #d01030 100%); position: relative; }
.spectrum::before { content: ""; position: absolute; inset: 0; background: linear-gradient(rgba(255,255,255,.1), rgba(0,0,0,.75)); }
.wb { position: absolute; right: 0; top: 0; width: 6px; height: 12px; background: linear-gradient(#fff 50%, #000 50%); z-index: 1; }

.p-styles { height: 371px; flex: none; display: flex; flex-direction: column; }
.stylesbody { flex: 1; min-height: 0; display: flex; background: #454545; justify-content: space-between; }
.stylegrid { width: 168px; height: 72px; display: grid; grid-template-columns: repeat(7, 24px); grid-auto-rows: 24px; background: #454545; }
.cell { display: flex; align-items: center; justify-content: center; background: #4b4b4b; border-right: 1px solid #444; border-bottom: 1px solid #444; }
.cell.first { background: #333; }
.pscroll { width: 12px; flex: none; background: #484848; border-left: 2px solid #3a3a3a; }
.sw { width: 12px; height: 12px; display: block; }
.s-none { width: 13px; height: 13px; background: linear-gradient(45deg, #fff 45%, #c8102a 45% 55%, #fff 55%); }
.s-fire { background: radial-gradient(#f8a020, #b81808); box-shadow: 0 0 0 1px #201008; }
.s-frame { width: 17px; height: 17px; border: 1px solid #d8d8b8; outline: 1px solid #c8c8a8; outline-offset: 1px; background: #555; border-radius: 2px; }
.s-dark { background: linear-gradient(#888, #222 60%); box-shadow: 1px 1px 0 #222; }
.s-blue { background: linear-gradient(135deg, #7cc8f0 40%, #1f70c0 40%); }
.s-gray { background: #a2a2a2; }
.s-graygrad { background: linear-gradient(135deg, #333, #999); }
.s-brown1 { background: #5c5232; }
.s-brown2 { background: linear-gradient(#7c6e48, #64552e); }
.s-red { background: repeating-linear-gradient(#c81c3a 0 3px, #901030 3px 4px, #e06070 4px 5px); }
.s-multi { background: conic-gradient(#e8d020, #209030, #101010, #c01060, #e8e8e8, #2080c0, #e8d020); }
.s-yellow { background: #605010; border: 3px solid #e8d810; }
.s-orange { background: linear-gradient(135deg, #d07030, #c89068 70%, #c06040); }
.s-lblue { background: linear-gradient(#d0e8f8, #78b0e0); border: 1px solid #a8d0e8; }
.s-sky { background: linear-gradient(#a0d8f0 0 45%, #f0e0b0 45% 60%, #805010 60%); }
.s-noise { background: repeating-conic-gradient(#ddd 0 25%, #888 0 50%) 0 0 / 3px 3px; }
.s-purple { background: linear-gradient(#a080e0, #6050a8); box-shadow: 2px 2px 0 #222; }
.s-out { border: 1px solid #3c3c3c; }
.pfoot { height: 15px; flex: none; display: flex; align-items: center; background: #535353; border-top: 1px solid #626262; }
.f-styles { justify-content: flex-end; gap: 11px; padding-right: 22px; }

.p-layers { flex: 1; min-height: 0; display: flex; flex-direction: column; }
.lrow { flex: none; display: flex; align-items: center; padding-left: 4px; border-bottom: 1px solid #3f3f3f; box-shadow: 0 1px #5e5e5e; color: #9a9a9a; }
.r-filter { height: 20px; }
.r-mode { height: 21px; }
.r-lock { height: 20px; }
.s-filter { width: 52px; height: 16px; color: #a8a8a8; }
.ficons { display: flex; align-items: center; gap: 8px; margin-left: 20px; }
.fT { color: #808080; font: bold 11px "Liberation Serif", serif; }
.ftoggle { width: 6px; height: 14px; background: #6c6c6c; margin-left: 2px; }
.s-blend { width: 82px; height: 15px; color: #a8a8a8; }
.plbl { white-space: nowrap; color: #8c8c8c; }
.plbl.op { width: 43px; margin-left: 7px; }
.dimfield { width: 25px; height: 15px; line-height: 15px; background: #4a4a4a; color: #686868; text-align: center; font-size: 9px; }
.fbtn.small { width: 12px; height: 15px; }
.lockicons { display: flex; align-items: center; gap: 6px; margin-left: 10px; width: 74px; }
.chk { width: 10px; height: 10px; background: repeating-conic-gradient(#8c8c8c 0 25%, #5a5a5a 0 50%) 0 0 / 5px 5px; }
.plbl.fill { width: 25px; }
.layersbody { flex: 1; min-height: 0; display: flex; background: #454545; margin-top: 2px; }
.layerlist { flex: 1; }
.layer { height: 30px; display: flex; border-bottom: 1px solid #3a3a3a; }
.eye { width: 23px; display: flex; align-items: center; justify-content: center; background: #4b4b4b; border-right: 1px solid #3a3a3a; }
.lmain { flex: 1; background: #5a6b84; display: flex; align-items: center; padding-left: 3px; }
.thumb-l { width: 18px; height: 24px; background: #fff; border: 1px solid #222; }
.lname { margin-left: 9px; font-style: italic; color: #f0f0f0; }
.llock { margin-left: auto; margin-right: 13px; }
.f-layers { justify-content: flex-end; gap: 9px; padding-right: 20px; }
.fx { font: italic 11px "Liberation Serif", serif; color: #7c7c7c; width: 12px; }
```
